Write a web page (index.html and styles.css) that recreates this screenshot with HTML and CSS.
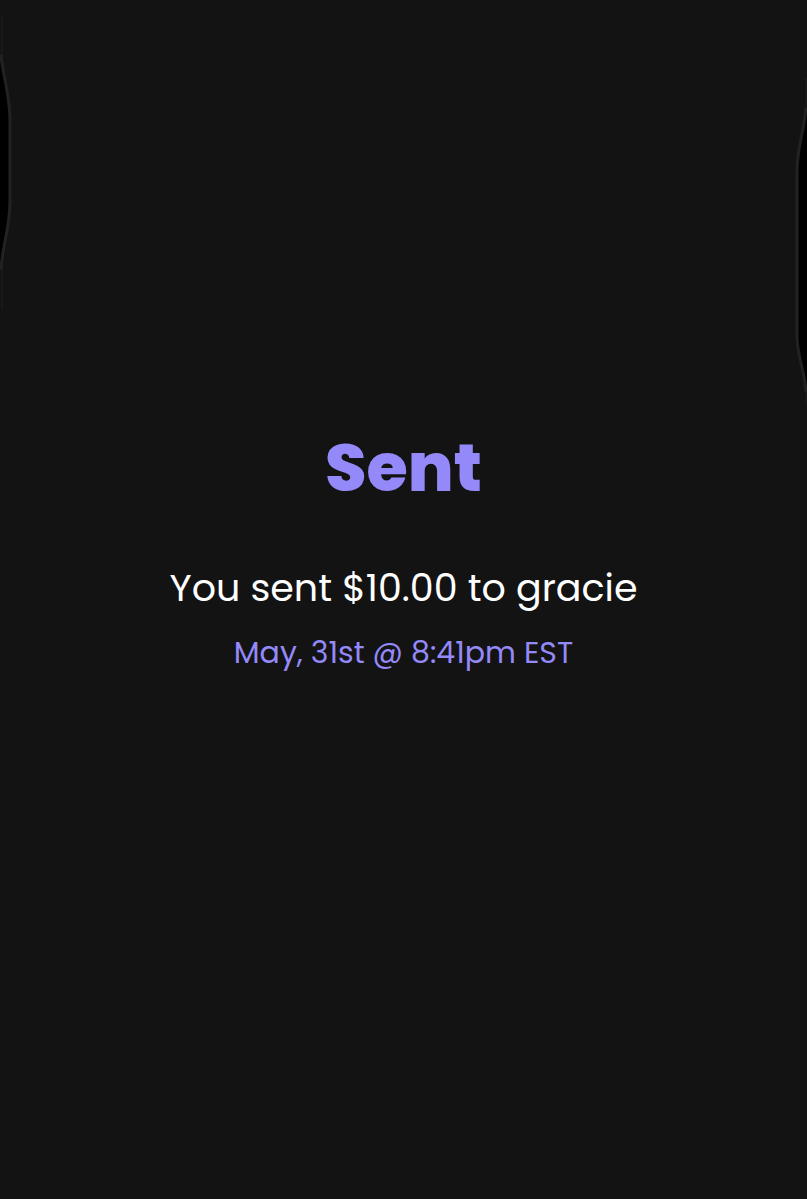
FILE: index.html
```
<!DOCTYPE html>
<html lang="en">
  <head>
    <meta charset="UTF-8" />
    <meta name="viewport" content="width=device-width, initial-scale=1.0" />
    <title>Sent</title>
    <link rel="stylesheet" href="styles.css" />
  </head>
  <body>
    <!-- side buttons of the phone -->
    <svg class="edge edge_left" width="16" height="420" viewBox="0 0 16 420" aria-hidden="true">
      <path class="gap" d="M0 55C3 76 9 92 9 122V200C9 230 2 242 0 270Z" />
      <path class="rim faint" d="M2 15V55M2 265V310" />
      <path class="rim" d="M1 55C3 78 10 92 10 122V200C10 230 3 240 1 270" />
    </svg>
    <svg class="edge edge_right" width="16" height="420" viewBox="0 0 16 420" aria-hidden="true">
      <path class="gap" d="M16 110C13 132 7 146 7 172V335C7 358 13 366 16 392Z" />
      <path class="rim faint" d="M15 78V110M15 390V405" />
      <path class="rim" d="M15 108C13 132 6 146 6 172V335C6 358 13 366 15 392" />
    </svg>
    <main class="container">
      <h1 class="page_title">Sent</h1>
      <p class="message">You sent $10.00 to gracie</p>
      <p class="date">May, 31st @ 8:41pm EST</p>
    </main>
  </body>
</html>
```
FILE: styles.css
```
body {
  margin: 0;
  background-color: #131313;
  font-family: Poppins, Inter, sans-serif;
}
.container {
  display: flex;
  flex-direction: column;
  align-items: center;
  box-sizing: border-box;
  min-height: 100vh;
  padding: 428px 24px 24px;
  text-align: center;
}
.page_title {
  margin: 0 0 52px;
  font-size: 67px;
  line-height: 80px;
  font-weight: 800;
  color: #9489f8;
}
.message {
  margin: 0 0 16px;
  font-size: 38px;
  line-height: 56px;
  color: #fff;
}
.date {
  margin: 0;
  font-size: 30px;
  line-height: 42px;
  color: #9489f8;
}
/* the buttons lie over the edges of the screen */
.edge {
  position: absolute;
  top: 0;
}
.edge_left {
  left: 0;
}
.edge_right {
  right: 0;
}
.gap {
  fill: #000;
}
.rim {
  fill: none;
  stroke: #222;
  stroke-width: 3;
}
.faint {
  stroke: #191919;
  stroke-width: 2;
}
```
